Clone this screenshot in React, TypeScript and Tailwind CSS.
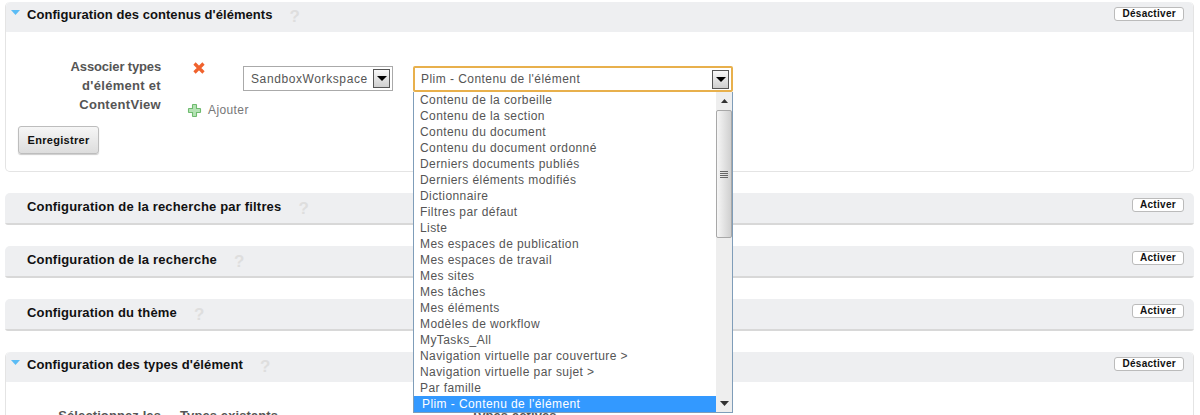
const options = [
  "Contenu de la corbeille",
  "Contenu de la section",
  "Contenu du document",
  "Contenu du document ordonné",
  "Derniers documents publiés",
  "Derniers éléments modifiés",
  "Dictionnaire",
  "Filtres par défaut",
  "Liste",
  "Mes espaces de publication",
  "Mes espaces de travail",
  "Mes sites",
  "Mes tâches",
  "Mes éléments",
  "Modèles de workflow",
  "MyTasks_All",
  "Navigation virtuelle par couverture >",
  "Navigation virtuelle par sujet >",
  "Par famille",
];

const SelectArrow = () => (
  <span className="flex h-[19px] w-[17px] shrink-0 items-center justify-center border border-[#555] bg-gradient-to-b from-[#f8f8f8] to-[#cfcfcf]">
    <svg width="10" height="5" viewBox="0 0 10 5">
      <path d="M0 0h10L5 5z" fill="#000" />
    </svg>
  </span>
);

const Caret = () => (
  <svg width="9" height="5" viewBox="0 0 9 5" className="mt-[3px] ml-[5px] shrink-0">
    <path d="M0 0h9L4.5 5z" fill="#5bbcf5" />
  </svg>
);

type HeaderProps = {
  title: string;
  action: string;
  open?: boolean;
  titleClass: string;
};

const PanelHeader = ({ title, action, open, titleClass }: HeaderProps) => (
  <div className={`flex items-start rounded-t-[5px] bg-[#eeeff1] ${open ? "h-[30px] pt-[5px]" : "h-[30px] pt-[6px]"}`}>
    <div className={`${open ? "w-[21px]" : "w-[22px]"} shrink-0`}>{open && <Caret />}</div>
    <h2 className={`text-[13px] leading-[16px] font-bold text-[#111] ${titleClass}`}>{title}</h2>
    <span className="mt-[1px] ml-[17px] text-[17px] leading-none font-bold text-[#dedede]">?</span>
    <button
      className={`ml-auto h-[14px] rounded-[3px] border border-[#bbb] bg-white px-[7px] text-[10px] leading-[12px] font-bold tracking-[0.3px] text-[#111] ${
        open ? "mr-[9px]" : "mt-[-1px] mr-[10px]"
      }`}
    >
      {action}
    </button>
  </div>
);

const ClosedPanel = ({ title, titleClass }: { title: string; titleClass: string }) => (
  <section className="mt-[21px] rounded-t-[5px] rounded-b-[3px] border-b-2 border-[#d8d8d8]">
    <PanelHeader title={title} action="Activer" titleClass={titleClass} />
  </section>
);

const OptionsList = () => (
  <div className="absolute top-[26px] left-0 z-10 flex h-[321px] w-[320px] border border-t-0 border-[#7f9db9] bg-white">
    <ul className="flex-1">
      {options.map((o) => (
        <li key={o} className="h-4 pl-[6px] text-[12px] leading-4 tracking-[0.42px] text-[#555]">
          {o}
        </li>
      ))}
      <li className="h-4 bg-[#3399ff] pl-[8px] text-[12px] leading-4 tracking-[0.42px] text-white">
        Plim - Contenu de l'élément
      </li>
    </ul>
    <div className="flex w-[16px] flex-col bg-[#eeeeee]">
      <div className="flex h-[18px] items-center justify-center">
        <svg width="7" height="4" viewBox="0 0 7 4">
          <path d="M0 4h7L3.5 0z" fill="#333" />
        </svg>
      </div>
      <div className="flex h-[128px] flex-col items-center justify-center gap-[1px] rounded-[2px] border border-[#a8a8a8] bg-gradient-to-r from-[#f6f6f6] to-[#d0d0d0]">
        <span className="h-px w-[8px] bg-[#666]" />
        <span className="h-px w-[8px] bg-[#666]" />
        <span className="h-px w-[8px] bg-[#666]" />
        <span className="h-px w-[8px] bg-[#666]" />
      </div>
      <div className="mt-auto flex h-[17px] items-center justify-center">
        <svg width="9" height="5" viewBox="0 0 9 5">
          <path d="M0 0h9L4.5 5z" fill="#333" />
        </svg>
      </div>
    </div>
  </div>
);

export default function App() {
  return (
    <div className="h-[415px] w-[1200px] overflow-hidden bg-white pt-[2px] pr-[6px] pl-[5px] font-['Liberation_Sans',Arial,sans-serif]">
      {/* CONTENT PANEL */}
      <section className="h-[170px] rounded-[5px] border border-t-0 border-[#e4e4e4]">
        <PanelHeader
          title="Configuration des contenus d'éléments"
          action="Désactiver"
          open
          titleClass="tracking-[0.05px]"
        />
        <div className="flex h-[94px] items-start pt-[24px]">
          <div className="w-[155px] shrink-0 pt-px text-right text-[13px] leading-[19px] font-bold tracking-[0.3px] text-[#555]">
            <span className="tracking-[-0.15px]">Associer types</span>
            <br />
            d'élément et
            <br />
            ContentView
          </div>
          <div className="ml-[26px] w-[56px] shrink-0">
            <svg width="14" height="14" viewBox="0 0 14 14" className="mt-[5px] ml-[5px]">
              <path d="M2.5 2.5l9 9M11.5 2.5l-9 9" stroke="#f0622d" strokeWidth="3.2" />
            </svg>
            <div className="mt-[27px] flex items-center">
              <svg width="15" height="15" viewBox="0 0 15 15" className="shrink-0">
                <path
                  d="M6 1.5h3a.5.5 0 0 1 .5.5v3.5H13a.5.5 0 0 1 .5.5v3a.5.5 0 0 1-.5.5H9.500V13a.5.5 0 0 1-.5.5H6a.5.5 0 0 1-.5-.5V9.500H2a.5.5 0 0 1-.5-.5V6a.5.5 0 0 1 .5-.5h3.500V2a.5.5 0 0 1 .5-.5z"
                  fill="#b5e3b5"
                  stroke="#6fbb6f"
                  strokeWidth="1.1"
                />
              </svg>
              <span className="ml-[6px] text-[12px] leading-4 tracking-[0.4px] text-[#777]">Ajouter</span>
            </div>
          </div>
          <div className="mt-[10px] flex h-[25px] w-[150px] shrink-0 items-center border border-[#aaa] pr-[2px] pl-[7px]">
            <span className="flex-1 text-[12px] tracking-[0.6px] whitespace-nowrap text-[#555]">
              SandboxWorkspace
            </span>
            <SelectArrow />
          </div>
          <div className="relative mt-[10px] ml-[20px] w-[320px] shrink-0">
            <div className="flex h-[26px] items-center rounded-[2px] border-2 border-[#e8b04c] pr-[2px] pl-[6px]">
              <span className="flex-1 text-[12px] tracking-[0.45px] text-[#555]">Plim - Contenu de l'élément</span>
              <SelectArrow />
            </div>
            <OptionsList />
          </div>
        </div>
        <button className="ml-[12px] block h-[28px] w-[81px] rounded-[3px] border border-[#bdbdbd] bg-gradient-to-b from-[#f6f6f6] to-[#dddddd] text-[11px] font-bold tracking-[0.3px] text-[#111] shadow-[0_1px_1px_#ccc]">
          Enregistrer
        </button>
      </section>

      <ClosedPanel title="Configuration de la recherche par filtres" titleClass="tracking-[0.18px]" />
      <ClosedPanel title="Configuration de la recherche" titleClass="tracking-[0.2px]" />
      <ClosedPanel title="Configuration du thème" titleClass="tracking-[0.15px]" />

      {/* ITEM TYPES PANEL */}
      <section className="mt-[21px] rounded-t-[5px] border-x border-[#e4e4e4]">
        <PanelHeader title="Configuration des types d'élément" action="Désactiver" open titleClass="tracking-[0.1px]" />
        <div className="flex pt-[26px] text-[13px] leading-[16px] font-bold tracking-[0.1px] text-[#555]">
          <span className="w-[155px] text-right">Sélectionnez les</span>
          <span className="ml-[19px]">Types existants</span>
          <span className="ml-[193px]">Types activés</span>
        </div>
      </section>
    </div>
  );
}
